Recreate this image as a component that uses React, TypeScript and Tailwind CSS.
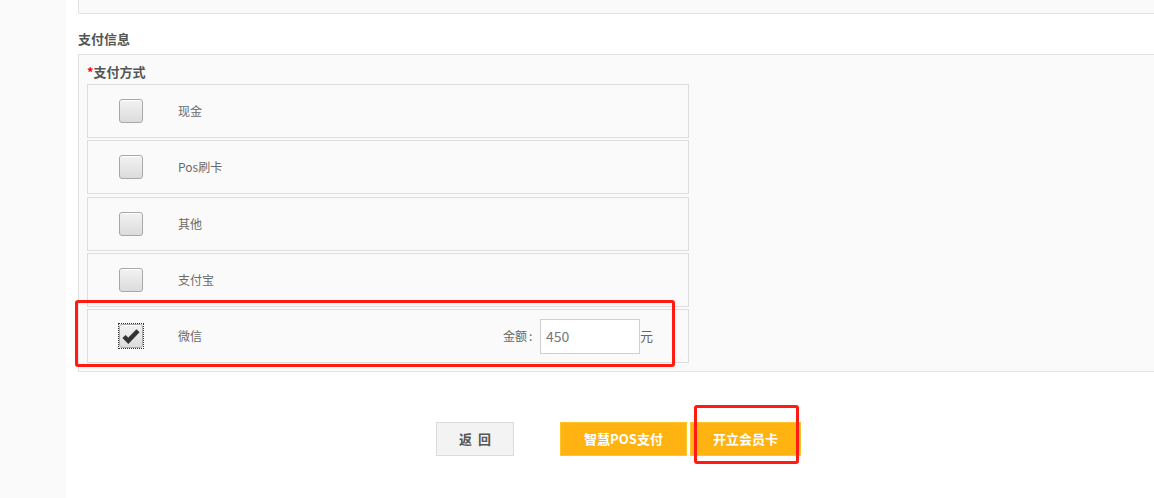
import React from "react";

const font = { fontFamily: '"Microsoft YaHei", "Noto Sans CJK SC", "Noto Sans", sans-serif' };

function Checkbox({ checked }: { checked?: boolean }) {
  return (
    <div
      className={
        "flex h-[24px] w-[24px] items-center justify-center " +
        (checked ? "outline outline-1 outline-dotted outline-[#333] outline-offset-[0px]" : "")
      }
    >
      <div className="flex h-[24px] w-[24px] items-center justify-center rounded-[3px] border border-[#a8a8a8] bg-gradient-to-b from-[#f2f2f2] to-[#dcdcdc] shadow-[inset_0_1px_0_#fff]">
        {checked && (
          <svg width="18" height="16" viewBox="0 0 18 16">
            <path d="M2 8.5 L6.3 12.8 L16 2.8" fill="none" stroke="#333" strokeWidth="4.4" strokeLinecap="butt" strokeLinejoin="miter" />
          </svg>
        )}
      </div>
    </div>
  );
}

function Row({ label, checked, mt, amount }: { label: string; checked?: boolean; mt: string; amount?: boolean }) {
  return (
    <div className={"flex h-[54px] w-[602px] items-center border border-[#dedede] bg-[#fafafa] pl-[31px] " + mt}>
      <Checkbox checked={checked} />
      <span className="ml-[35px] text-[12px] text-[#6a6a6a]">{label}</span>
      {amount && (
        <div className="ml-auto mr-[35px] flex items-center text-[12px] text-[#666]">
          <span>金额</span>
          <span className="w-[13px] pl-[2px]">:</span>
          <div className="flex h-[35px] w-[100px] items-center border border-[#cfcfcf] bg-white pl-[5px] text-[14px] text-[#777]">450</div>
          <span className="text-[13px]">元</span>
        </div>
      )}
    </div>
  );
}

export default function App() {
  return (
    <div className="relative flex h-[498px] w-[1154px] overflow-hidden bg-white" style={font}>
      <div className="h-full w-[66px] shrink-0 bg-[#fafafa]" />
      <div className="flex flex-1 flex-col pl-[12px]">
        <div className="h-[14px] w-[1100px] border-b border-l border-[#e2e2e2] bg-[#fafafa]" />
        <div className="mt-[17px] h-[16px] text-[13px] font-bold leading-[16px] text-[#555]">支付信息</div>
        <div className="mt-[7px] h-[318px] w-[1100px] border border-[#e2e2e2] bg-[#fafafa] pl-[8px]">
          <div className="mt-[9px] h-[16px] text-[13px] font-bold leading-[16px] text-[#555]">
            <span className="text-[#f00]">*</span>支付方式
          </div>
          <Row label="现金" mt="mt-[4px]" />
          <Row label="Pos刷卡" mt="mt-[2px]" />
          <Row label="其他" mt="mt-[3px]" />
          <Row label="支付宝" mt="mt-[2px]" />
          <Row label="微信" mt="mt-[2px]" checked amount />
        </div>
        <div className="mt-[50px] flex items-center pl-[358px]">
          <div className="flex h-[34px] w-[78px] items-center justify-center border border-[#dcdcdc] bg-[#f3f3f3] text-[13px] font-bold text-[#555]">
            返&nbsp;&nbsp;回
          </div>
          <div className="ml-[46px] flex h-[34px] w-[127px] items-center justify-center border border-[#ffc42a] bg-[#ffb311] text-[13px] font-bold text-white">
            智慧POS支付
          </div>
          <div className="ml-[3px] flex h-[34px] w-[111px] items-center justify-center border border-[#ffc42a] bg-[#ffb311] text-[13px] font-bold text-white">
            开立会员卡
          </div>
        </div>
      </div>
      <div className="pointer-events-none absolute left-[75px] top-[300px] h-[67px] w-[600px] rounded-[3px] border-[3px] border-[#ff1a12]" />
      <div className="pointer-events-none absolute left-[694px] top-[405px] h-[59px] w-[105px] rounded-[3px] border-[3px] border-[#ff1a12]" />
    </div>
  );
}
